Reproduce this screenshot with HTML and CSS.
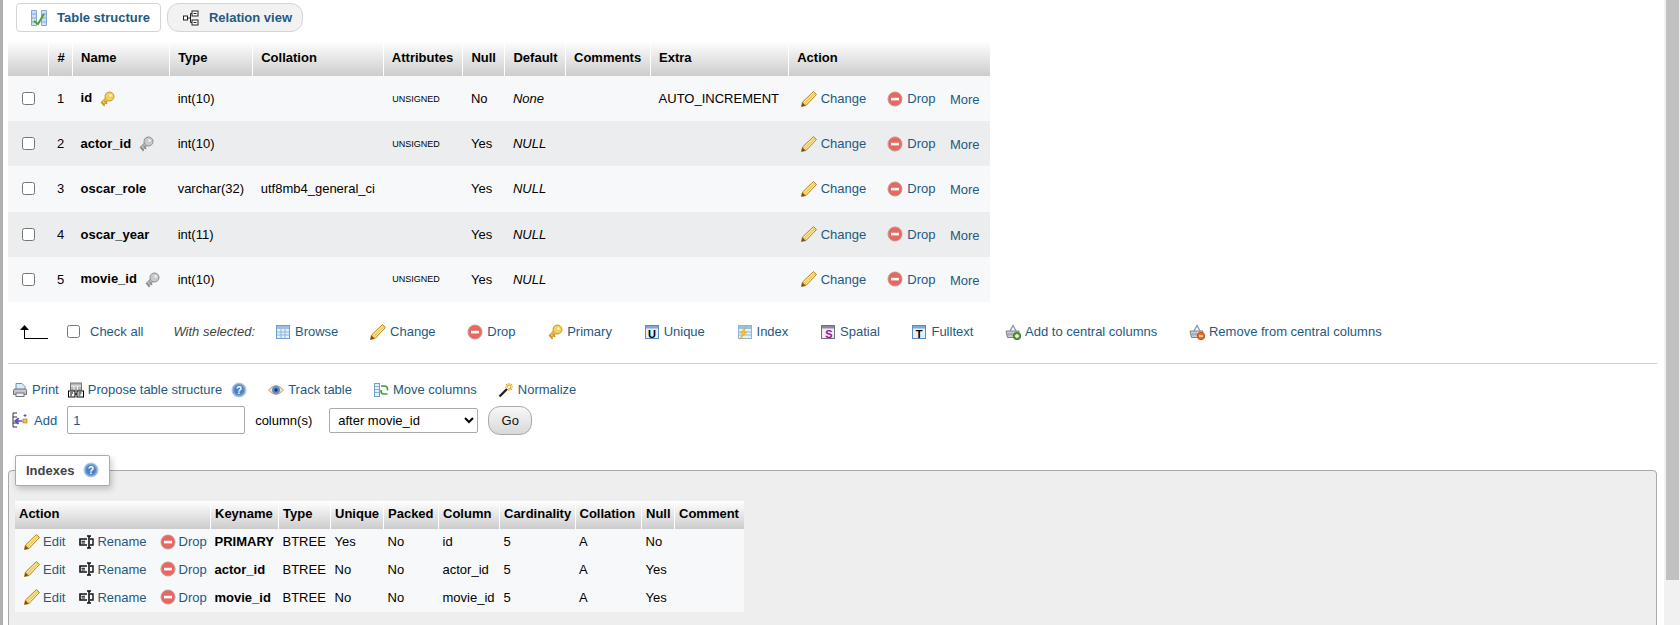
FILE: index.html
```html
<!DOCTYPE html>
<html lang="en">
<head>
  <meta charset="UTF-8">
  <meta name="viewport" content="width=device-width, initial-scale=1.0">
  <title>Table structure</title>
  <link rel="stylesheet" href="styles.css">
</head>
<body>
  <!-- icon sheet -->
  <svg class="icon-sheet" aria-hidden="true">
    <symbol id="i-pencil" viewBox="0 0 16 16">
      <path d="M12.500 .5 15.500 3.500 5 14.500 .5 15.500 1.500 11Z" fill="#f3cf62" stroke="#b9852a"/>
      <path d="M3 11 12.500 2M5 13 14 4" stroke="#fbeeb0" fill="none"/>
      <path d="M.5 15.500 1.500 11.500 4.500 14.500Z" fill="#7a4a1c"/>
    </symbol>
    <symbol id="i-drop" viewBox="0 0 16 16">
      <circle cx="8" cy="8" r="7" fill="#e8675f" stroke="#c9948f"/>
      <rect x="4" y="6.800" width="8" height="2.600" fill="#fff"/>
    </symbol>
    <symbol id="i-key" viewBox="0 0 16 16">
      <path d="M3 13 9 7" stroke="#c9962c" stroke-width="4.500"/>
      <path d="M3 13 9 7" stroke="#f7cf5c" stroke-width="2.500"/>
      <path d="M3 11 5.500 15M5.500 9.500 8 13" stroke="#c9962c" stroke-width="1.500"/>
      <circle cx="10.500" cy="5.500" r="4.500" fill="#f7cf5c" stroke="#c9962c"/>
      <circle cx="11.500" cy="4.500" r="1.300" fill="#fff6c9"/>
    </symbol>
    <symbol id="i-key-grey" viewBox="0 0 16 16">
      <path d="M3 13 9 7" stroke="#8c8c8c" stroke-width="4.500"/>
      <path d="M3 13 9 7" stroke="#c9c9c9" stroke-width="2.500"/>
      <path d="M3 11 5.500 15M5.500 9.500 8 13" stroke="#8c8c8c" stroke-width="1.500"/>
      <circle cx="10.500" cy="5.500" r="4.500" fill="#c9c9c9" stroke="#8c8c8c"/>
      <circle cx="11.500" cy="4.500" r="1.300" fill="#f2f2f2"/>
    </symbol>
    <symbol id="i-table" viewBox="0 0 16 16">
      <rect x="1.500" y="1.500" width="13" height="13" fill="#e6f0fa" stroke="#6f9fd0"/>
      <rect x="2" y="2" width="12" height="3" fill="#9cbfe4"/>
      <path d="M2 8h12M2 11h12M6 5v9M10 5v9" stroke="#8fb4dc"/>
    </symbol>
    <symbol id="i-index" viewBox="0 0 16 16">
      <rect x="1.500" y="1.500" width="13" height="13" fill="#e6f0fa" stroke="#8fb4dc"/>
      <rect x="2" y="2" width="12" height="3" fill="#9cbfe4"/>
      <path d="M2 8h12M2 11h12" stroke="#8fb4dc"/>
      <path d="M9 3 3 9h3l-3 6 7-7H7Z" fill="#f2c531" stroke="#d69f1e" stroke-width=".5"/>
    </symbol>
    <symbol id="i-basket-add" viewBox="0 0 16 16">
      <path d="M5 7 8 1.500 11 7" fill="none" stroke="#7d97b3" stroke-width="1.300"/>
      <path d="M1 7h13l-1.500 6.500h-10Z" fill="#c9cdd1" stroke="#7c8288"/>
      <path d="M4 9v3M7 9v3M10 9v3M2 10h11" stroke="#8d9298" stroke-width=".7"/>
      <circle cx="12" cy="12" r="3.700" fill="#55a03a" stroke="#3d7a28"/>
      <path d="M10 12h4M12 10v4" stroke="#fff" stroke-width="1.300"/>
    </symbol>
    <symbol id="i-basket-remove" viewBox="0 0 16 16">
      <path d="M5 7 8 1.500 11 7" fill="none" stroke="#7d97b3" stroke-width="1.300"/>
      <path d="M1 7h13l-1.500 6.500h-10Z" fill="#c9cdd1" stroke="#7c8288"/>
      <path d="M4 9v3M7 9v3M10 9v3M2 10h11" stroke="#8d9298" stroke-width=".7"/>
      <circle cx="12" cy="12" r="3.700" fill="#ee6a1c" stroke="#c44f0f"/>
      <path d="M10 12h4" stroke="#fff" stroke-width="1.300"/>
    </symbol>
    <symbol id="i-print" viewBox="0 0 16 16">
      <path d="M4 1.500h6l3 3V8H4Z" fill="#dce9f7" stroke="#6f93ba"/>
      <path d="M1.500 8.500q0-1.500 1.500-1.500h10q1.500 0 1.500 1.500v4H1.500Z" fill="#c5c7ca" stroke="#6f7276"/>
      <rect x="4" y="11" width="8" height="3.500" fill="#f4f4f4" stroke="#6f7276"/>
    </symbol>
    <symbol id="i-propose" viewBox="0 0 16 16">
      <rect x="2.500" y="1" width="11" height="7" fill="#b8b8bc" stroke="#77777d"/>
      <path d="M3 4h10M6 4v4M9.500 4v4" stroke="#f0f0f0"/>
      <rect x=".5" y="9" width="6.500" height="6" fill="#fff" stroke="#000"/>
      <rect x="9" y="9" width="6.500" height="6" fill="#fff" stroke="#000"/>
      <path d="M2 11h3M2 13h2M10.500 11h3M10.500 13h2M7 12h2" stroke="#000"/>
    </symbol>
    <symbol id="i-eye" viewBox="0 0 16 16">
      <path d="M.5 8Q8 -1 15.500 8 8 17 .5 8Z" fill="#f3ddcb" stroke="#c99c7c"/>
      <circle cx="8" cy="8" r="4" fill="#5d8fca"/>
      <circle cx="8" cy="8" r="1.700" fill="#1d3a60"/>
    </symbol>
    <symbol id="i-move" viewBox="0 0 16 16">
      <rect x="1.500" y="1.500" width="5" height="13" fill="#e6f0fa" stroke="#6f9fd0"/>
      <path d="M2 4.500h4M2 7.500h4M2 10.500h4" stroke="#8fb4dc"/>
      <path d="M8 4h3.500a3 3 0 0 1 3 3v1.500" fill="none" stroke="#3f9a3a" stroke-width="1.600"/>
      <path d="M14.500 12H11a3 3 0 0 1-3-3V8" fill="none" stroke="#3f9a3a" stroke-width="1.600"/>
    </symbol>
    <symbol id="i-wand" viewBox="0 0 16 16">
      <path d="M1.500 14.500 9 7" stroke="#222" stroke-width="2.400"/>
      <path d="M11 1v3M11 6v3M7 5h3M12 5h3M8 2l2 2M12 6l2 2M14 2l-2 2" stroke="#eda41c" stroke-width="1.200"/>
    </symbol>
    <symbol id="i-add-col" viewBox="0 0 16 16">
      <path d="M1 1h4M1 15h4M1 5h4M1 11h4M1 1v14" stroke="#333" fill="none"/>
      <rect x="11" y="7" width="4" height="4" fill="#f2c531" stroke="#9a7a18" stroke-width=".6"/>
      <path d="M10.500 9H6M6.500 6 3 9l3.500 3" fill="#5d4fd0" stroke="#5d4fd0" stroke-width="1.600"/>
      <path d="M13 2v3M11.500 3.500h3" stroke="#5d4fd0"/>
    </symbol>
    <symbol id="i-rename" viewBox="0 0 16 16">
      <path d="M9 5H2v6h7" fill="none" stroke="#111" stroke-width="1.600"/>
      <path d="M3.500 7.300h3.500M3.500 9h3.500" stroke="#111"/>
      <path d="M9 2h4M9 14h4M11 2v12" stroke="#111" stroke-width="1.600"/>
      <path d="M12 5h3v6h-3" fill="none" stroke="#111" stroke-width="1.400"/>
    </symbol>
    <symbol id="i-structure" viewBox="0 0 16 16">
      <path d="M.5 .5h5v15h-5ZM10.500 .5h5v15h-5Z" fill="#cfe0f2" stroke="#82a9d3"/>
      <path d="M1 4h4M1 8h4M1 12h4M11 4h4M11 8h4M11 12h4" stroke="#82a9d3"/>
      <path d="M3 11 7 14 13 4" fill="none" stroke="#4da02f" stroke-width="2"/>
    </symbol>
    <symbol id="i-relation" viewBox="0 0 16 16">
      <path d="M4.500 8h3M7.500 3.500v9M7.500 3.500h1.500M7.500 12.500h1.500" stroke="#222" fill="none"/>
      <rect x=".5" y="6" width="4" height="4" fill="#fff" stroke="#222"/>
      <rect x="9" y="1" width="6" height="5" fill="#fff" stroke="#222"/>
      <rect x="9" y="10" width="6" height="5" fill="#fff" stroke="#222"/>
      <path d="M10.500 3.500h3M10.500 12.500h3" stroke="#222"/>
    </symbol>
    <symbol id="i-arrow" viewBox="0 0 28 16">
      <path d="M4.500 15V4M4.500 14.500H28" stroke="#000" fill="none"/>
      <path d="M0 6 4.500 1 9 6Z" fill="#000"/>
    </symbol>
  </svg>

  <div class="layout">
    <main class="page">
      <nav class="tabs">
        <a class="tab tab-active"><svg class="icon"><use href="#i-structure"/></svg>Table structure</a>
        <a class="tab"><svg class="icon"><use href="#i-relation"/></svg>Relation view</a>
      </nav>

      <table class="data structure">
        <colgroup>
          <col class="c-check"><col class="c-num"><col class="c-name"><col class="c-type"><col class="c-coll"><col class="c-attr">
          <col class="c-null"><col class="c-default"><col class="c-comm"><col class="c-extra"><col class="c-action">
        </colgroup>
        <thead>
          <tr><th></th><th>#</th><th>Name</th><th>Type</th><th>Collation</th><th>Attributes</th><th>Null</th><th>Default</th><th>Comments</th><th>Extra</th><th>Action</th></tr>
        </thead>
        <tbody>
          <tr>
            <td><input type="checkbox"></td><td>1</td>
            <td class="col-name"><b>id</b><svg class="icon key"><use href="#i-key"/></svg></td>
            <td>int(10)</td><td></td><td class="attr">UNSIGNED</td><td>No</td><td class="dflt">None</td><td></td><td>AUTO_INCREMENT</td>
            <td><div class="row-actions"><a><svg class="icon"><use href="#i-pencil"/></svg>Change</a><a><svg class="icon"><use href="#i-drop"/></svg>Drop</a><a class="more">More</a></div></td>
          </tr>
          <tr>
            <td><input type="checkbox"></td><td>2</td>
            <td class="col-name"><b>actor_id</b><svg class="icon key"><use href="#i-key-grey"/></svg></td>
            <td>int(10)</td><td></td><td class="attr">UNSIGNED</td><td>Yes</td><td class="dflt">NULL</td><td></td><td></td>
            <td><div class="row-actions"><a><svg class="icon"><use href="#i-pencil"/></svg>Change</a><a><svg class="icon"><use href="#i-drop"/></svg>Drop</a><a class="more">More</a></div></td>
          </tr>
          <tr>
            <td><input type="checkbox"></td><td>3</td>
            <td class="col-name"><b>oscar_role</b></td>
            <td>varchar(32)</td><td>utf8mb4_general_ci</td><td></td><td>Yes</td><td class="dflt">NULL</td><td></td><td></td>
            <td><div class="row-actions"><a><svg class="icon"><use href="#i-pencil"/></svg>Change</a><a><svg class="icon"><use href="#i-drop"/></svg>Drop</a><a class="more">More</a></div></td>
          </tr>
          <tr>
            <td><input type="checkbox"></td><td>4</td>
            <td class="col-name"><b>oscar_year</b></td>
            <td>int(11)</td><td></td><td></td><td>Yes</td><td class="dflt">NULL</td><td></td><td></td>
            <td><div class="row-actions"><a><svg class="icon"><use href="#i-pencil"/></svg>Change</a><a><svg class="icon"><use href="#i-drop"/></svg>Drop</a><a class="more">More</a></div></td>
          </tr>
          <tr>
            <td><input type="checkbox"></td><td>5</td>
            <td class="col-name"><b>movie_id</b><svg class="icon key"><use href="#i-key-grey"/></svg></td>
            <td>int(10)</td><td></td><td class="attr">UNSIGNED</td><td>Yes</td><td class="dflt">NULL</td><td></td><td></td>
            <td><div class="row-actions"><a><svg class="icon"><use href="#i-pencil"/></svg>Change</a><a><svg class="icon"><use href="#i-drop"/></svg>Drop</a><a class="more">More</a></div></td>
          </tr>
        </tbody>
      </table>

      <div class="bulk-bar">
        <svg class="arrow"><use href="#i-arrow"/></svg>
        <label class="check-all"><input type="checkbox"><a>Check all</a></label>
        <i class="with-selected">With selected:</i>
        <div class="bulk-links">
          <a><svg class="icon"><use href="#i-table"/></svg>Browse</a>
          <a><svg class="icon"><use href="#i-pencil"/></svg>Change</a>
          <a><svg class="icon"><use href="#i-drop"/></svg>Drop</a>
          <a><svg class="icon"><use href="#i-key"/></svg>Primary</a>
          <a><svg class="icon" viewBox="0 0 16 16"><rect x="1.500" y="1.500" width="13" height="13" fill="#e6f0fa" stroke="#5b8ac0"/><rect x="2" y="2" width="12" height="2.500" fill="#7fa8d6"/><text x="8" y="14" class="icon-letter" fill="#000">U</text></svg>Unique</a>
          <a><svg class="icon"><use href="#i-index"/></svg>Index</a>
          <a><svg class="icon" viewBox="0 0 16 16"><rect x="1.500" y="1.500" width="13" height="13" fill="#f1eef2" stroke="#6f6f7a"/><rect x="2" y="2" width="12" height="2.500" fill="#8c8c98"/><text x="9" y="14" class="icon-letter" fill="#a0109a">S</text></svg>Spatial</a>
          <a><svg class="icon" viewBox="0 0 16 16"><rect x="1.500" y="1.500" width="13" height="13" fill="#e6f0fa" stroke="#5b8ac0"/><rect x="2" y="2" width="12" height="2.500" fill="#7fa8d6"/><text x="8" y="14" class="icon-letter" fill="#000">T</text></svg>Fulltext</a>
          <a><svg class="icon"><use href="#i-basket-add"/></svg>Add to central columns</a>
          <a><svg class="icon"><use href="#i-basket-remove"/></svg>Remove from central columns</a>
        </div>
      </div>

      <hr class="divider">

      <div class="tools">
        <a><svg class="icon"><use href="#i-print"/></svg>Print</a>
        <a class="tool-propose"><svg class="icon"><use href="#i-propose"/></svg>Propose table structure<svg class="icon help" viewBox="0 0 16 16"><circle cx="8" cy="8" r="7" fill="#7aa5d8" stroke="#b3cbe6"/><circle cx="8" cy="8" r="5" fill="#4f80c0"/><text x="8" y="11.500" class="icon-letter icon-letter-sm" fill="#fff">?</text></svg></a>
        <a><svg class="icon"><use href="#i-eye"/></svg>Track table</a>
        <a><svg class="icon"><use href="#i-move"/></svg>Move columns</a>
        <a><svg class="icon"><use href="#i-wand"/></svg>Normalize</a>
      </div>

      <form class="add-row">
        <svg class="icon"><use href="#i-add-col"/></svg>
        <span class="add-label">Add</span>
        <input class="add-count" type="text" value="1">
        <span class="add-unit">column(s)</span>
        <select class="add-after"><option>after movie_id</option></select>
        <button class="go" type="button">Go</button>
      </form>

      <fieldset class="indexes">
        <legend>Indexes<svg class="icon help" viewBox="0 0 16 16"><circle cx="8" cy="8" r="7" fill="#7aa5d8" stroke="#b3cbe6"/><circle cx="8" cy="8" r="5" fill="#4f80c0"/><text x="8" y="11.500" class="icon-letter icon-letter-sm" fill="#fff">?</text></svg></legend>
        <table class="data index-table">
          <colgroup>
            <col class="i-action"><col class="i-key"><col class="i-type"><col class="i-uniq"><col class="i-pack">
            <col class="i-col"><col class="i-card"><col class="i-coll"><col class="i-null"><col class="i-comm">
          </colgroup>
          <thead>
            <tr><th>Action</th><th>Keyname</th><th>Type</th><th>Unique</th><th>Packed</th><th>Column</th><th>Cardinality</th><th>Collation</th><th>Null</th><th>Comment</th></tr>
          </thead>
          <tbody>
            <tr>
              <td><div class="index-actions"><a><svg class="icon"><use href="#i-pencil"/></svg>Edit</a><a><svg class="icon"><use href="#i-rename"/></svg>Rename</a><a><svg class="icon"><use href="#i-drop"/></svg>Drop</a></div></td>
              <td><b>PRIMARY</b></td><td>BTREE</td><td>Yes</td><td>No</td><td>id</td><td>5</td><td>A</td><td>No</td><td></td>
            </tr>
            <tr>
              <td><div class="index-actions"><a><svg class="icon"><use href="#i-pencil"/></svg>Edit</a><a><svg class="icon"><use href="#i-rename"/></svg>Rename</a><a><svg class="icon"><use href="#i-drop"/></svg>Drop</a></div></td>
              <td><b>actor_id</b></td><td>BTREE</td><td>No</td><td>No</td><td>actor_id</td><td>5</td><td>A</td><td>Yes</td><td></td>
            </tr>
            <tr>
              <td><div class="index-actions"><a><svg class="icon"><use href="#i-pencil"/></svg>Edit</a><a><svg class="icon"><use href="#i-rename"/></svg>Rename</a><a><svg class="icon"><use href="#i-drop"/></svg>Drop</a></div></td>
              <td><b>movie_id</b></td><td>BTREE</td><td>No</td><td>No</td><td>movie_id</td><td>5</td><td>A</td><td>Yes</td><td></td>
            </tr>
          </tbody>
        </table>
      </fieldset>
    </main>

    <div class="scrollbar"><div class="scrollbar-thumb"></div></div>
  </div>
</body>
</html>
```

FILE: styles.css
```css
html, body {
  margin: 0;
  height: 100%;
  overflow: hidden;
}

body {
  font-family: "Liberation Sans", Arial, sans-serif;
  font-size: 13px;
  color: #000;
  background: #fff;
}

a {
  color: #235a81;
}

.icon-sheet {
  display: block;
  width: 0;
  height: 0;
}

.icon-letter {
  font-family: "Liberation Sans", Arial, sans-serif;
  font-size: 11px;
  font-weight: bold;
  text-anchor: middle;
}

.icon-letter-sm {
  font-size: 10px;
}

.icon {
  width: 16px;
  height: 16px;
  flex: none;
  vertical-align: middle;
}

.layout {
  display: flex;
  height: 625px;
}

.page {
  flex: 1;
  min-width: 0;
  overflow: hidden;
  border-left: 3px solid #b0b0b0;
  padding: 3px 7px 0 5px;
}

.scrollbar {
  width: 16px;
  background: #f1f1f1;
}

.scrollbar-thumb {
  height: 580px;
  margin: 0 1px 0 2px;
  background: #c1c1c1;
}

/* tabs */
.tabs {
  display: flex;
  gap: 6px;
  padding-left: 8px;
}

.tab {
  display: flex;
  align-items: center;
  gap: 10px;
  height: 27px;
  padding: 0 10px 0 15px;
  border: 1px solid #d5d5d5;
  border-radius: 12px;
  background: #f2f2f2;
  font-weight: bold;
}

.tab-active {
  padding-left: 14px;
  border-radius: 4px;
  background: #fff;
}

/* tables */
.data {
  border-collapse: collapse;
  table-layout: fixed;
}

.data th {
  padding: 0 8px 2px;
  border-right: 1px solid #fff;
  background: linear-gradient(#fff, #ccc);
  text-align: left;
  font-weight: bold;
  white-space: nowrap;
}

.data th:last-child {
  border-right: 0;
}

.data td {
  padding: 0 8px;
  white-space: nowrap;
}

.data tbody tr:nth-child(odd) {
  background: #f7f8fa;
}

.structure {
  width: 982px;
  margin-top: 9px;
}

.structure thead tr {
  height: 35px;
}

.structure tbody tr {
  height: 45.2px;
}

.structure tbody tr:nth-child(even) {
  background: #ecedee;
}

.structure th:nth-child(2),
.structure td:nth-child(2) {
  padding-left: 9px;
}

.structure input {
  display: block;
  margin: 0 0 0 6px;
}

.c-check { width: 40px; }
.c-num { width: 24.5px; }
.c-name { width: 97px; }
.c-type { width: 83px; }
.c-coll { width: 130.5px; }
.c-attr { width: 79.5px; }
.c-null { width: 42px; }
.c-default { width: 60.5px; }
.c-comm { width: 85px; }
.c-extra { width: 138px; }
.c-action { width: 201px; }

.key {
  margin-left: 7px;
}

.data .attr {
  padding-left: 9px;
  font-size: 9px;
}

.dflt {
  font-style: italic;
}

.row-actions {
  display: flex;
  gap: 21px;
  padding-left: 4px;
}

.row-actions a,
.index-actions a,
.bulk-links a,
.tools a {
  display: flex;
  align-items: center;
  gap: 4px;
}

.row-actions .more {
  margin-left: -6.5px;
  padding-top: 2px;
}

/* bulk actions */
.bulk-bar {
  display: flex;
  align-items: center;
  height: 20px;
  margin-top: 20px;
  padding-left: 12px;
}

.arrow {
  width: 28px;
  height: 16px;
}

.check-all {
  display: flex;
  align-items: center;
  gap: 10px;
  margin-left: 19px;
}

.check-all input {
  margin: 0;
}

.with-selected {
  margin-left: 30px;
  color: #444;
}

.bulk-links {
  display: flex;
  gap: 31.7px;
  margin-left: 20px;
}

.divider {
  height: 1px;
  margin: 21px 0 16px;
  border: 0;
  background: #d0d0d0;
}

/* table tools */
.tools {
  display: flex;
  gap: 21px;
  height: 20px;
  padding-left: 4px;
}

.tools a:first-child {
  margin-right: -12px;
}

.help {
  margin-left: 5px;
}

.add-row {
  display: flex;
  align-items: center;
  height: 29px;
  margin-top: 6px;
  padding-left: 4px;
}

.add-label {
  margin-left: 6px;
  color: #235a81;
}

.add-count {
  box-sizing: border-box;
  width: 178px;
  height: 28px;
  margin: 0 0 0 10px;
  padding: 0 5px;
  border: 1px solid #aaa;
  border-radius: 2px;
  font: inherit;
  color: #235a81;
}

.add-unit {
  margin-left: 10px;
}

.add-after {
  box-sizing: border-box;
  width: 149px;
  height: 25px;
  margin-left: 17px;
  padding-left: 4px;
  border: 1px solid #aaa;
  border-radius: 2px;
  background: #fff;
  font: inherit;
}

.go {
  box-sizing: border-box;
  width: 44px;
  height: 29px;
  margin-left: 10px;
  border: 1px solid #aaa;
  border-radius: 12px;
  background: linear-gradient(#f8f8f8, #d8d8d8);
  font: inherit;
  color: #111;
}

/* indexes */
.indexes {
  box-sizing: border-box;
  height: 300px;
  margin: 20px 0 0;
  padding: 0 6px;
  border: 1px solid #aaa;
  border-radius: 4px 4px 0 0;
  background: #eee;
}

.indexes legend {
  display: flex;
  align-items: center;
  box-sizing: border-box;
  height: 31px;
  width: 95px;
  padding: 0 0 0 10px;
  border: 1px solid #aaa;
  border-radius: 2px;
  background: #fff;
  box-shadow: 2px 3px 6px rgba(0, 0, 0, 0.2);
  font-weight: bold;
  color: #444;
}

.indexes legend .help {
  margin-left: 9px;
}

.index-table {
  width: 729px;
  margin-top: 15px;
}

.index-table thead tr {
  height: 28px;
}

.index-table tbody tr {
  height: 27.7px;
  background: #f7f8fa;
}

.index-table th,
.index-table td {
  padding-left: 4px;
  padding-right: 4px;
}

.index-table td {
  padding-bottom: 2px;
}

.index-actions {
  display: flex;
  gap: 13px;
  padding-left: 5px;
}

.index-actions a {
  gap: 3px;
}

.i-action { width: 195.5px; }
.i-key { width: 68px; }
.i-type { width: 52px; }
.i-uniq { width: 53px; }
.i-pack { width: 55px; }
.i-col { width: 61px; }
.i-card { width: 75.5px; }
.i-coll { width: 66.5px; }
.i-null { width: 33px; }
.i-comm { width: 69.5px; }
```
